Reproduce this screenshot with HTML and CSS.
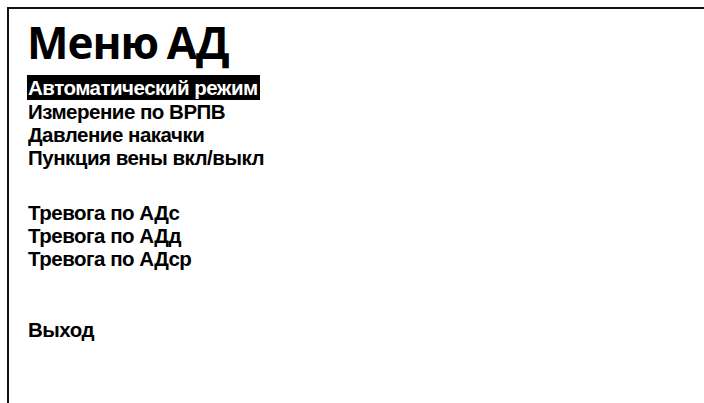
FILE: index.html
```html
<!DOCTYPE html>
<html lang="ru">
<head>
<meta charset="utf-8">
<title>Меню АД</title>
<link rel="stylesheet" href="styles.css">
</head>
<body>
<div class="screen">
  <h1 class="title">Меню АД</h1>
  <ul class="menu">
    <li class="item selected">Автоматический режим</li>
    <li class="item">Измерение по ВРПВ</li>
    <li class="item">Давление накачки</li>
    <li class="item">Пункция вены вкл/выкл</li>
    <li class="gap gap-alarms"></li>
    <li class="item">Тревога по АДс</li>
    <li class="item">Тревога по АДд</li>
    <li class="item">Тревога по АДср</li>
    <li class="gap gap-exit"></li>
    <li class="item">Выход</li>
  </ul>
</div>
</body>
</html>
```

FILE: styles.css
```css
html, body {
  margin: 0;
  height: 100%;
  background: #fff;
  overflow: hidden;
}

/* framed screen: only the top and left edges are visible */
.screen {
  box-sizing: border-box;
  margin: 7px 0 0 7px;
  height: calc(100% - 7px);
  border-top: 2px solid #111;
  border-left: 2px solid #111;
  padding: 9px 0 0 18px;
}

.title {
  margin: 0 0 9px;
  font-family: "Open Sans", sans-serif;
  font-weight: 700;
  font-size: 44px;
  line-height: 48px;
  letter-spacing: -1px;
  word-spacing: -2px;
  color: #000;
}

.menu {
  list-style: none;
  margin: 0;
  padding: 0;
  font-family: "Liberation Sans", Arial, sans-serif;
  font-weight: 700;
  font-size: 20.5px;
  line-height: 23px;
  letter-spacing: -0.5px;
  color: #000;
}

.item {
  display: table;
  padding: 0 2px 0 1px;
}

.selected {
  background: #000;
  color: #fff;
  padding-top: 1px;
  padding-bottom: 1px;
}

.gap-alarms {
  height: 32px;
}

.gap-exit {
  height: 48px;
}
```
